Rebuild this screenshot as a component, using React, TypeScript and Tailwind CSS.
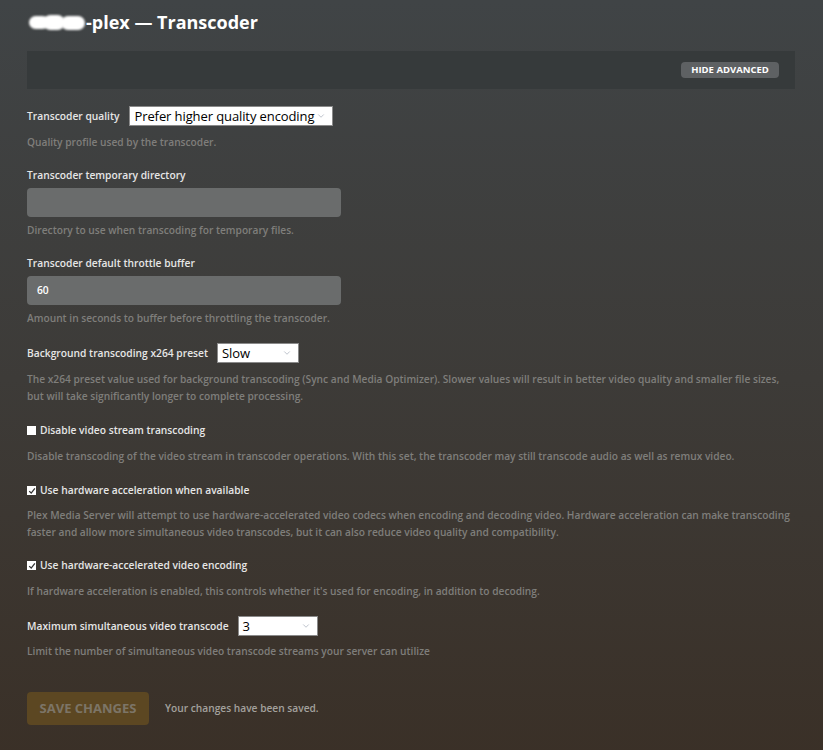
import React from 'react';
import { ChevronDown } from 'lucide-react';

const font = { fontFamily: '"Open Sans", "Noto Sans", sans-serif' };

const Select: React.FC<{ value: string; width: string }> = ({ value, width }) => (
  <div
    className={`flex items-center justify-between h-5 ${width} bg-white border border-[#8a8a8a] pl-1 pr-1.5 text-[13px] leading-none text-black whitespace-nowrap tracking-[-0.1px]`}
  >
    <span>{value}</span>
    <ChevronDown className="w-2.5 h-2.5 shrink-0 text-gray-400" strokeWidth={1.5} />
  </div>
);

const Help: React.FC<{ children: React.ReactNode; className?: string }> = ({ children, className = '' }) => (
  <p className={`text-[10.2px] leading-[17px] font-semibold text-[#7f7e7b] ${className}`}>{children}</p>
);

const Label: React.FC<{ children: React.ReactNode }> = ({ children }) => (
  <span className="block text-[10.25px] leading-[17px] font-semibold text-[#e6e6e6]">{children}</span>
);

const Checkbox: React.FC<{ checked?: boolean; label: string }> = ({ checked, label }) => (
  <label className="flex items-center gap-[4px]">
    <span className="w-[9px] h-[9px] bg-white flex items-center justify-center">
      {checked && (
        <svg viewBox="0 0 10 10" className="w-[8px] h-[8px]">
          <path d="M1.5 5.2 L4 7.6 L8.6 1.8" fill="none" stroke="#333" strokeWidth="1.6" />
        </svg>
      )}
    </span>
    <Label>{label}</Label>
  </label>
);

export default function App() {
  return (
    <div
      style={font}
      className="min-h-[750px] w-full bg-gradient-to-b from-[#404446] via-[#3d3b38] to-[#3a3027] px-[27px] pt-[10px] pb-8"
    >
      <h1 className="flex items-center text-[18px] font-bold text-white leading-6">
        <span className="relative w-[58px] h-[18px] mr-[1px]">
          <span className="absolute left-[2px] top-[3px] w-[20px] h-[13px] rounded-full bg-white blur-[1px]" />
          <span className="absolute left-[16px] top-[2px] w-[22px] h-[15px] rounded-full bg-white blur-[1px]" />
          <span className="absolute left-[34px] top-[3px] w-[24px] h-[14px] rounded-full bg-white blur-[1px]" />
        </span>
        -plex — Transcoder
      </h1>

      <div className="mt-[17px] h-[38px] w-[768px] bg-[#363a3b] flex items-center justify-end pr-4">
        <button className="h-4 w-[98px] rounded-sm bg-[#5e6163] text-[9.5px] font-bold text-white leading-none">
          HIDE ADVANCED
        </button>
      </div>

      <div className="mt-[17px]">
        <div className="flex items-center gap-[10px]">
          <Label>Transcoder quality</Label>
          <Select value="Prefer higher quality encoding" width="w-[204px]" />
        </div>
        <Help className="mt-[8px]">Quality profile used by the transcoder.</Help>
      </div>

      <div className="mt-[16px]">
        <Label>Transcoder temporary directory</Label>
        <div className="mt-1 h-[29px] w-[314px] rounded-sm bg-[#6a6c6c]" />
        <Help className="mt-[5px]">Directory to use when transcoding for temporary files.</Help>
      </div>

      <div className="mt-[16px]">
        <Label>Transcoder default throttle buffer</Label>
        <div className="mt-1 h-[29px] w-[314px] rounded-sm bg-[#6a6c6c] flex items-center px-[10px] text-[10.25px] font-semibold text-white">
          60
        </div>
        <Help className="mt-[5px]">Amount in seconds to buffer before throttling the transcoder.</Help>
      </div>

      <div className="mt-[16px]">
        <div className="flex items-center gap-[9px]">
          <Label>Background transcoding x264 preset</Label>
          <Select value="Slow" width="w-[82px]" />
        </div>
        <Help className="mt-[8px] w-[768px]">
          The x264 preset value used for background transcoding (Sync and Media Optimizer). Slower values will result in better video quality and smaller file sizes, but will take significantly longer to complete processing.
        </Help>
      </div>

      <div className="mt-[17px]">
        <Checkbox label="Disable video stream transcoding" />
        <Help className="mt-[9px]">
          Disable transcoding of the video stream in transcoder operations. With this set, the transcoder may still transcode audio as well as remux video.
        </Help>
      </div>

      <div className="mt-[17px]">
        <Checkbox checked label="Use hardware acceleration when available" />
        <Help className="mt-[8px] w-[768px]">
          Plex Media Server will attempt to use hardware-accelerated video codecs when encoding and decoding video. Hardware acceleration can make transcoding faster and allow more simultaneous video transcodes, but it can also reduce video quality and compatibility.
        </Help>
      </div>

      <div className="mt-[16px]">
        <Checkbox checked label="Use hardware-accelerated video encoding" />
        <Help className="mt-[9px]">
          If hardware acceleration is enabled, this controls whether it's used for encoding, in addition to decoding.
        </Help>
      </div>

      <div className="mt-[16px]">
        <div className="flex items-center gap-[9px]">
          <Label>Maximum simultaneous video transcode</Label>
          <Select value="3" width="w-[80px]" />
        </div>
        <Help className="mt-[7px]">Limit the number of simultaneous video transcode streams your server can utilize</Help>
      </div>

      <div className="mt-[32px] flex items-center gap-4">
        <button className="h-[33px] w-[122px] rounded-sm bg-[#5c4722] text-[13px] font-bold text-[#7c7567]">
          SAVE CHANGES
        </button>
        <span className="text-[10.2px] font-semibold text-[#a3a19d]">Your changes have been saved.</span>
      </div>
    </div>
  );
}
